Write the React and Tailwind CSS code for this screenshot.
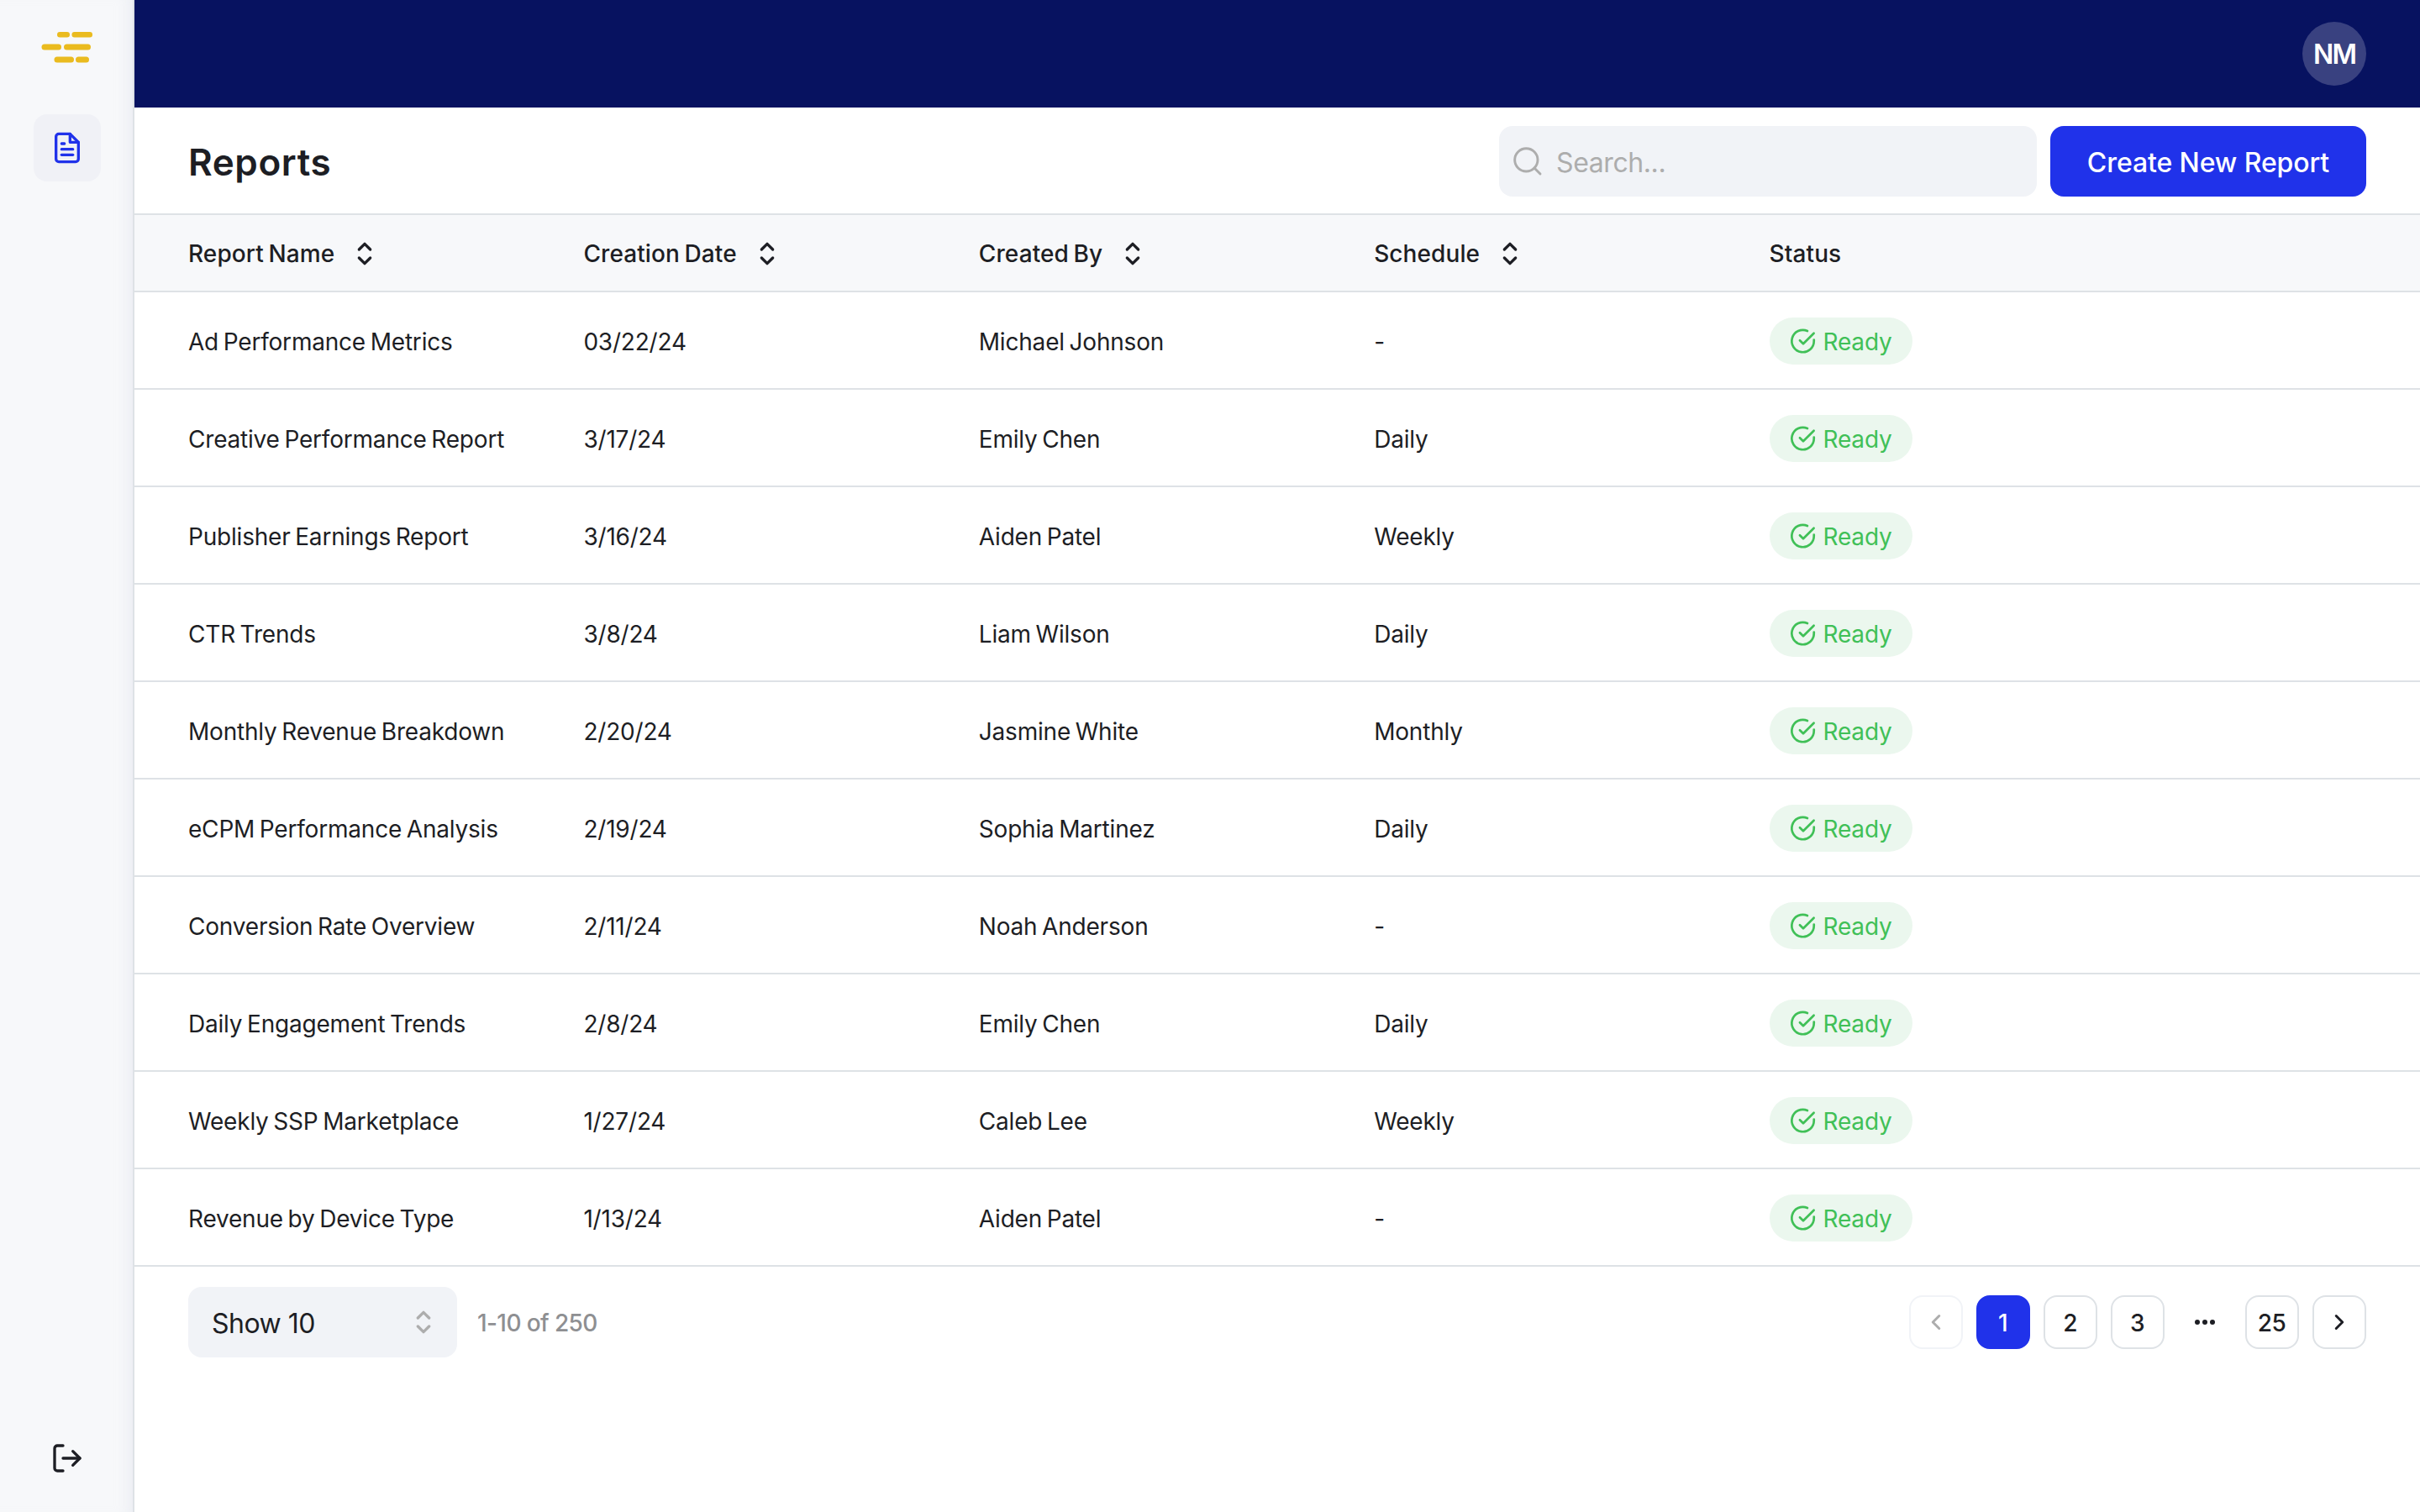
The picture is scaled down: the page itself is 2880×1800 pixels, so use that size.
import React, { useState } from 'react';

const columns = [
  { label: 'Report Name', sortable: true },
  { label: 'Creation Date', sortable: true },
  { label: 'Created By', sortable: true },
  { label: 'Schedule', sortable: true },
  { label: 'Status', sortable: false },
];

const reports = [
  { name: 'Ad Performance Metrics', date: '03/22/24', author: 'Michael Johnson', schedule: '-' },
  { name: 'Creative Performance Report', date: '3/17/24', author: 'Emily Chen', schedule: 'Daily' },
  { name: 'Publisher Earnings Report', date: '3/16/24', author: 'Aiden Patel', schedule: 'Weekly' },
  { name: 'CTR Trends', date: '3/8/24', author: 'Liam Wilson', schedule: 'Daily' },
  { name: 'Monthly Revenue Breakdown', date: '2/20/24', author: 'Jasmine White', schedule: 'Monthly' },
  { name: 'eCPM Performance Analysis', date: '2/19/24', author: 'Sophia Martinez', schedule: 'Daily' },
  { name: 'Conversion Rate Overview', date: '2/11/24', author: 'Noah Anderson', schedule: '-' },
  { name: 'Daily Engagement Trends', date: '2/8/24', author: 'Emily Chen', schedule: 'Daily' },
  { name: 'Weekly SSP Marketplace', date: '1/27/24', author: 'Caleb Lee', schedule: 'Weekly' },
  { name: 'Revenue by Device Type', date: '1/13/24', author: 'Aiden Patel', schedule: '-' },
];

const Icon = ({ className, strokeWidth = 2, children }) => (
  <svg
    className={`shrink-0 ${className}`}
    viewBox="0 0 24 24"
    fill="none"
    stroke="currentColor"
    strokeWidth={strokeWidth}
    strokeLinecap="round"
    strokeLinejoin="round"
  >
    {children}
  </svg>
);

const SelectorIcon = ({ className }) => (
  <Icon className={className}>
    <path d="M8 9l4 -4l4 4" />
    <path d="M16 15l-4 4l-4 -4" />
  </Icon>
);

const Logo = () => (
  <svg className="w-[62px] h-[38px]" viewBox="0 0 62 38" fill="#eabb1f">
    <rect x="19" y="1" width="15" height="6.5" rx="3.25" />
    <rect x="36.5" y="1" width="24.5" height="6.5" rx="3" />
    <rect x="0.5" y="15.5" width="23.5" height="7" rx="3.5" />
    <rect x="27" y="15.5" width="32" height="7" rx="3.5" />
    <rect x="15.5" y="30.5" width="23.5" height="7" rx="3.5" />
    <rect x="41" y="30.5" width="16" height="7" rx="3.5" />
  </svg>
);

const Sidebar = () => (
  <aside className="flex flex-col items-center w-40 h-full shrink-0 border-r-2 border-[#dee2e6] bg-[#f7f8fa] pt-[37px] pb-11 pl-0.5 shadow-[inset_-16px_0_16px_-12px_rgba(222,226,236,0.5)]">
    <Logo />
    <button className="flex items-center justify-center w-20 h-20 mt-[61px] rounded-2xl bg-[#f0f1f6] text-[#2032ea]">
      <Icon className="size-10">
        <path d="M14 2H6a2 2 0 0 0-2 2v16a2 2 0 0 0 2 2h12a2 2 0 0 0 2-2V8z" />
        <path d="M14 2v6h6" />
        <path d="M16 13H8" />
        <path d="M16 17H8" />
        <path d="M10 9H8" />
      </Icon>
    </button>
    <button className="mt-auto">
      <Icon className="size-10">
        <path d="M9 21H5a2 2 0 0 1-2-2V5a2 2 0 0 1 2-2h4" />
        <path d="m16 17 5-5-5-5" />
        <path d="M21 12H9" />
      </Icon>
    </button>
  </aside>
);

const StatusBadge = () => (
  <span className="inline-flex items-center h-14 w-[170px] rounded-full bg-[#ebf7ee] pl-[22px] text-[#40c057]">
    <Icon className="size-9 mr-1.5" strokeWidth={1.8}>
      <path d="M20.5 11v1a8.8 8.8 0 1 1-5.2-8" />
      <path d="M9.3 11.5l2.7 2.7l8.4-8.4" />
    </Icon>
    <span className="pt-px tracking-[-0.2px]">Ready</span>
  </span>
);

const PageButton = ({ active, disabled, onClick, children }) => (
  <button
    onClick={onClick}
    disabled={disabled}
    className={`flex items-center justify-center size-16 rounded-2xl border-2 pt-0.5 pr-px font-medium tracking-[-0.6px] ${
      active
        ? 'border-[#2032ea] bg-[#2032ea] text-white'
        : disabled
          ? 'border-[#f1f3f7] text-[#adadad]'
          : 'border-[#dee2e6]'
    }`}
  >
    {children}
  </button>
);

const App = () => {
  const [page, setPage] = useState(1);

  return (
    <div className="flex w-full h-screen overflow-hidden bg-white text-[28px] leading-[44px] text-[#1d1e24] font-[Inter,sans-serif]">
      <Sidebar />
      <div className="flex flex-col flex-1 min-w-0">
        <header className="flex items-center justify-end h-32 px-16 bg-[#071260]">
          <div className="flex items-center justify-center size-[76px] pt-0.5 rounded-full bg-[#394180] text-[32px] font-semibold tracking-[-2px] text-white">
            NM
          </div>
        </header>

        <div className="flex items-center h-32 pt-0.5 px-16 border-b-2 border-[#dee2e6]">
          <h1 className="pt-0.5 mr-auto text-[44px] font-semibold tracking-[0.6px]">Reports</h1>
          <label className="flex items-center w-[640px] h-[84px] mr-4 px-3.5 rounded-2xl bg-[#f1f3f7] text-[#adadad]">
            <Icon className="size-10 mr-3.5" strokeWidth={1.75}>
              <circle cx="11" cy="11" r="8.2" />
              <path d="m21 21-4.2-4.2" />
            </Icon>
            <input
              className="w-full pt-1 text-[32px] tracking-[-0.4px] outline-none placeholder:text-[#adadad]"
              placeholder="Search..."
            />
          </label>
          <button className="flex items-center justify-center w-[376px] h-[84px] pt-1 rounded-2xl bg-[#2032ea] text-[32px] font-medium tracking-[-0.1px] text-white">
            Create New Report
          </button>
        </div>

        <div className="flex items-center h-[92px] pl-16 border-b-2 border-[#dee2e6] bg-[#f7f8fa] font-medium tracking-[0.1px] [word-spacing:-2px]">
          {columns.map((column) => (
            <div key={column.label} className="flex items-center w-[470.4px]">
              <span className="pt-0.5 whitespace-nowrap">{column.label}</span>
              {column.sortable && <SelectorIcon className="size-10 mt-0.5 ml-4" />}
            </div>
          ))}
        </div>

        {reports.map((report) => (
          <div
            key={report.name}
            className="flex items-center h-[116px] pt-0.5 pl-16 border-b-2 border-[#dee2e6] tracking-[-0.2px] [word-spacing:-2px]"
          >
            <span className="w-[470.4px] pt-px">{report.name}</span>
            <span className="w-[470.4px] pt-px">{report.date}</span>
            <span className="w-[470.4px] pt-px">{report.author}</span>
            <span className="w-[470.4px] pt-px">{report.schedule}</span>
            <StatusBadge />
          </div>
        ))}

        <footer className="flex items-center px-16 py-6">
          <button className="flex items-center justify-between w-80 h-[84px] pl-7 pr-5 rounded-2xl bg-[#f1f3f7] text-[32px] tracking-[-0.5px]">
            <span className="pt-1">Show 10</span>
            <SelectorIcon className="size-10 text-[#adadad]" />
          </button>
          <span className="pt-0.5 ml-6 font-medium tracking-[-0.6px] text-[#8e8f92]">1-10 of 250</span>
          <div className="flex gap-4 ml-auto">
            <PageButton disabled={page === 1} onClick={() => setPage(page - 1)}>
              <Icon className="size-9 -mt-0.5">
                <path d="m14.5 7-5 5 5 5" />
              </Icon>
            </PageButton>
            {[1, 2, 3].map((n) => (
              <PageButton key={n} active={page === n} onClick={() => setPage(n)}>
                {n}
              </PageButton>
            ))}
            <span className="flex items-center justify-center size-16">
              <svg className="w-6 h-2" viewBox="0 0 24 8" fill="currentColor">
                <circle cx="3" cy="4" r="3" />
                <circle cx="12" cy="4" r="3" />
                <circle cx="21" cy="4" r="3" />
              </svg>
            </span>
            <PageButton active={page === 25} onClick={() => setPage(25)}>
              25
            </PageButton>
            <PageButton onClick={() => setPage(page + 1)}>
              <Icon className="size-9 -mt-0.5">
                <path d="m9.5 7 5 5-5 5" />
              </Icon>
            </PageButton>
          </div>
        </footer>
      </div>
    </div>
  );
};

export default App;
